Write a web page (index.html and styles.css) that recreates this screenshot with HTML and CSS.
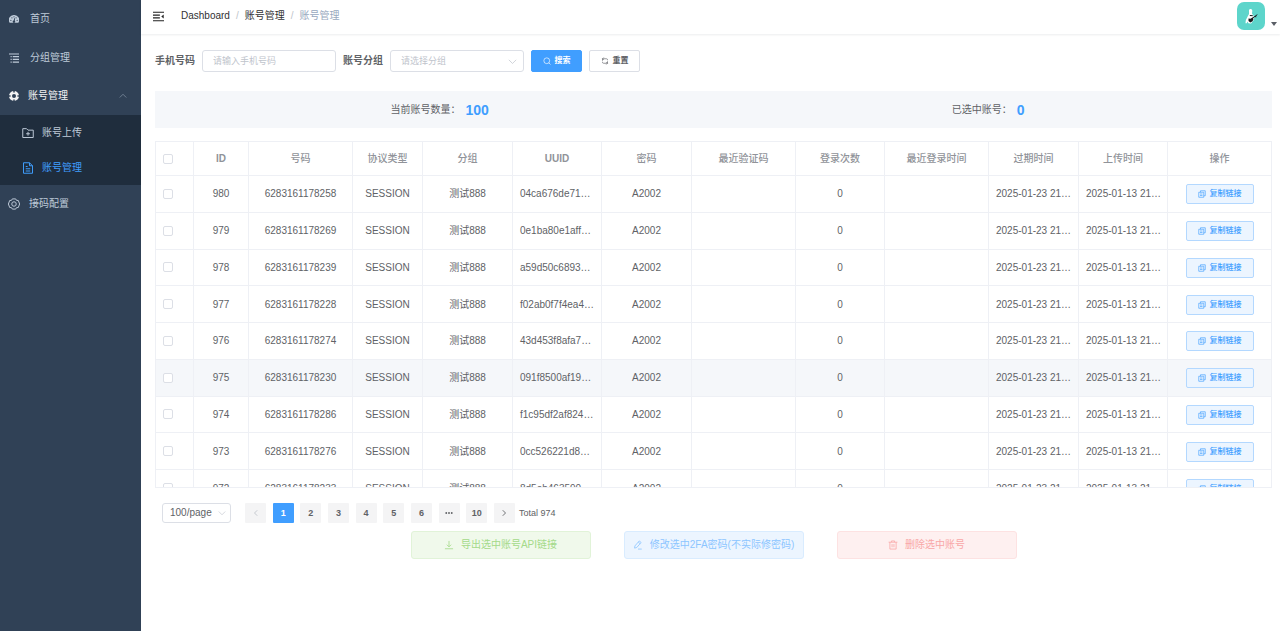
FILE: index.html
```html
<!DOCTYPE html>
<html lang="zh-CN">
<head>
<meta charset="utf-8">
<title>账号管理</title>
<link rel="stylesheet" href="styles.css">
</head>
<body>
<svg class="sprite" aria-hidden="true">
  <symbol id="i-copy" viewBox="0 0 16 16"><path d="M5 4.5V1.5h9.5v10h-3M1.500 4.500h10v10h-10zM4 8h5M4 11h5"/></symbol>
  <symbol id="i-down" viewBox="0 0 16 16"><path d="M1.500 5L8 11.500 14.500 5"/></symbol>
  <symbol id="i-left" viewBox="0 0 16 16"><path d="M10.500 2.500L5 8l5.500 5.500"/></symbol>
  <symbol id="i-right" viewBox="0 0 16 16"><path d="M5.500 2.500L11 8l-5.500 5.500"/></symbol>
</svg>
<div class="app">
  <nav class="sidebar">
    <a class="menu-item" href="#"><svg class="icon fill" viewBox="0 0 16 16"><path fill-rule="evenodd" d="M8 1.500a8 8 0 0 0-7 12.500h14A8 8 0 0 0 8 1.500zM3 11a1 1 0 1 1 0-2 1 1 0 0 1 0 2zm1.700-3.900a1 1 0 1 1 0-2 1 1 0 0 1 0 2zM8 5.400a1 1 0 1 1 0-2 1 1 0 0 1 0 2zm1.300 5.500a1.900 1.900 0 1 1-1.800-.6L8.600 6.500l1 .3zm2-3.800a1 1 0 1 1 0-2 1 1 0 0 1 0 2zM13 11a1 1 0 1 1 0-2 1 1 0 0 1 0 2z"/></svg>首页</a>
    <a class="menu-item" href="#"><svg class="icon" viewBox="0 0 16 16"><path stroke-width="1.800" d="M0 1.500h16M6 5.800h10M6 10.200h10M6 14.500h10M2.500 5.800h1.800M2.500 10.200h1.800M2.500 14.500h1.800"/></svg>分组管理</a>
    <a class="menu-item open" href="#"><svg class="icon" viewBox="0 0 16 16"><circle cx="8" cy="8" r="5.600" stroke-width="4.800"/><path class="cut" d="M8 0v2.500M8 13.500v2.500M0 8h2.500M13.500 8h2.500"/></svg>账号管理<svg class="icon arrow" viewBox="0 0 16 16"><path d="M1.500 11L8 4.500l6.500 6.500"/></svg></a>
    <div class="submenu">
      <a class="sub-item" href="#"><svg class="icon" viewBox="0 0 16 16"><path d="M1 14V2.200h5l2 2h7V14zM8 6.500v5M5.500 9h5"/></svg>账号上传</a>
      <a class="sub-item active" href="#"><svg class="icon" viewBox="0 0 16 16"><path d="M2 1h8l4 4v10H2zM10 1v4h4M5 6h2.500M5 9h6M5 12h6"/></svg>账号管理</a>
    </div>
    <a class="menu-item flush" href="#"><svg class="icon" viewBox="0 0 16 16"><path d="M5.800 1.200h4.400l1.200 2 2.300.1L15.500 8l-1.800 4.700-2.300.1-1.200 2H5.800l-1.200-2-2.300-.1L.5 8l1.800-4.700 2.300-.1z"/><circle cx="8" cy="8" r="3"/></svg>接码配置</a>
  </nav>

  <div class="page">
    <header class="topbar">
      <button class="fold" type="button" aria-label="折叠菜单"><svg class="icon" viewBox="0 0 16 16"><path stroke-width="1.700" d="M0 1.800h16M0 6h10M0 10h10M0 14.200h16"/><path class="solid" d="M15.500 5.200v5.600L12 8z"/></svg></button>
      <nav class="crumbs"><a href="#">Dashboard</a><span class="slash">/</span><a href="#">账号管理</a><span class="slash">/</span><span class="current">账号管理</span></nav>
      <button class="user" type="button" aria-label="用户菜单">
        <svg class="avatar" viewBox="0 0 28 28"><rect width="28" height="28" rx="7" fill="#5dd5cb"/><path fill="#fff" d="M12 8c.8-1.500 3.200-1 3.300.8l-.3 2.700 1.600 2.500.2 4-2.800 3.500-2.600-.3-.9-1.700-.8 1.700H8.500l.3-3 1.700-3.500 1.500-2.700z"/><path fill="#17191d" d="M11.500 16.500l2 .2 2-1.200 1 1.500-1 2.300-2.200 1.200-1.800-1.500z"/><path fill="none" stroke="#17191d" stroke-width="1" d="M15 16.500l2.500-1.800 2.800-2M12.800 13.500l3 .2M17.500 14.500l1.800.3"/></svg>
        <svg class="caret" viewBox="0 0 6 4"><path d="M0 0h6L3 4z"/></svg>
      </button>
    </header>

    <main class="content">
      <form class="filters">
        <label for="phone">手机号码</label>
        <input class="field" id="phone" type="text" placeholder="请输入手机号码">
        <label for="group">账号分组</label>
        <span class="select-wrap wide"><select class="field" id="group"><option>请选择分组</option></select><svg class="icon"><use href="#i-down"/></svg></span>
        <button class="btn primary" type="button"><svg class="icon" viewBox="0 0 16 16"><circle cx="7.500" cy="7.500" r="5.800"/><path d="M11.500 11.500l3.500 3.500"/></svg>搜索</button>
        <button class="btn" type="button"><svg class="icon" viewBox="0 0 16 16"><path d="M3 7.500V3.500h8a2 2 0 0 1 2 2v1M5.500 1L3 3.500 5.500 6M13 8.500v4H5a2 2 0 0 1-2-2v-1M10.500 15l2.500-2.500-2.500-2.500"/></svg>重置</button>
      </form>

      <section class="stats">
        <div>当前账号数量：<strong>100</strong></div>
        <div>已选中账号：<strong>0</strong></div>
      </section>

      <div class="table-box">
        <table>
          <colgroup><col class="c-check"><col class="c-id"><col class="c-wide"><col class="c-type"><col><col class="c-slim"><col><col class="c-wide"><col class="c-slim"><col class="c-wide"><col><col class="c-slim"><col class="c-wide"></colgroup>
          <thead><tr><th class="check"><input type="checkbox" aria-label="全选"></th><th class="latin">ID</th><th>号码</th><th>协议类型</th><th>分组</th><th class="latin">UUID</th><th>密码</th><th>最近验证码</th><th>登录次数</th><th>最近登录时间</th><th>过期时间</th><th>上传时间</th><th>操作</th></tr></thead>
          <tbody id="rows"></tbody>
        </table>
      </div>

      <div class="pagination">
        <span class="select-wrap size"><select class="field" aria-label="每页条数"><option>100/page</option></select><svg class="icon"><use href="#i-down"/></svg></span>
        <div class="pager">
          <button type="button" aria-label="上一页" disabled><svg class="icon"><use href="#i-left"/></svg></button>
          <button type="button" class="on">1</button><button type="button">2</button><button type="button">3</button><button type="button">4</button><button type="button">5</button><button type="button">6</button>
          <button type="button" aria-label="更多"><svg class="icon fill" viewBox="0 0 16 16"><circle cx="2.500" cy="8" r="1.900"/><circle cx="8" cy="8" r="1.900"/><circle cx="13.500" cy="8" r="1.900"/></svg></button>
          <button type="button">10</button>
          <button type="button" aria-label="下一页"><svg class="icon"><use href="#i-right"/></svg></button>
        </div>
        <span>Total 974</span>
      </div>

      <div class="actions">
        <button class="success" type="button" disabled><svg class="icon" viewBox="0 0 16 16"><path d="M8 1.500v9M4.500 7.500L8 11l3.500-3.500M1.500 14h13"/></svg>导出选中账号API链接</button>
        <button class="info" type="button" disabled><svg class="icon" viewBox="0 0 16 16"><path d="M3 9.500L10 1.500l3 2.500-7 8-3.500 1zM8.500 3.500l3 2.500M8 14.500h6"/></svg>修改选中2FA密码(不实际修密码)</button>
        <button class="danger" type="button" disabled><svg class="icon" viewBox="0 0 16 16"><path d="M1 3.500h14M5.500 3.500v-2h5v2M3 3.500v11h10v-11M6.500 6.500v5M9.500 6.500v5"/></svg>删除选中账号</button>
      </div>
    </main>
  </div>
</div>
<script src="rows.js"></script>
</body>
</html>
```
FILE: styles.css
```css
* { box-sizing: border-box; }
body { margin: 0; font: 10px/14px "Liberation Sans", "Noto Sans CJK SC", sans-serif; color: #606266; background: #fff; }
a { color: inherit; text-decoration: none; }
button, input, select { margin: 0; font: inherit; color: inherit; }
button { padding: 0; border: 0; background: none; }
.sprite { position: absolute; width: 0; height: 0; }
.icon { width: 10px; height: 10px; flex: none; fill: none; stroke: currentColor; stroke-width: 1.3; }
.icon.fill { fill: currentColor; stroke: none; }
.solid { fill: currentColor; stroke: none; }

.app { display: flex; min-height: 100vh; }
.sidebar { flex: none; width: 141px; background: #304156; color: #bfcbd9; }
.menu-item { display: flex; align-items: center; gap: 11px; height: 38px; padding: 0 14px 0 9px; }
.menu-item:first-child { margin-bottom: 1px; }
.menu-item.open { color: #f4f4f5; gap: 9px; }
.menu-item.flush { gap: 9px; padding-left: 8px; }
.menu-item.flush .icon { width: 12px; height: 12px; }
.cut { stroke: #304156; stroke-width: 2.4; }
.menu-item .arrow { width: 8px; height: 8px; margin-left: auto; color: #909fb0; }
.submenu { background: #1f2d3d; }
.sub-item { display: flex; align-items: center; gap: 8px; height: 35px; padding-left: 22px; }
.sub-item .icon { width: 12px; height: 12px; }
.sub-item.active { color: #409eff; }

.page { flex: 1; min-width: 0; }
.topbar { display: flex; align-items: center; height: 34px; padding: 0 3px 2px 12px; box-shadow: 0 1px 2px rgba(0, 21, 41, .08); }
.fold { display: flex; color: #222; }
.fold .icon { width: 11px; height: 11px; }
.crumbs { display: flex; margin-left: 17px; color: #303133; }
.slash { margin: 0 6px; color: #c0c4cc; }
.current { color: #97a8be; }
.user { display: flex; align-items: flex-end; gap: 6px; margin-left: auto; }
.avatar { width: 28px; height: 28px; }
.caret { width: 6px; height: 4px; margin-bottom: 4px; fill: #5a5e66; }

.content { padding: 16px 8px 0 14px; }
.filters { display: flex; align-items: center; gap: 7px; }
.filters label { font-weight: 700; }
.field { width: 134px; height: 22px; padding: 0 10px; border: 1px solid #dcdfe6; border-radius: 3px; background: #fff; font-size: 9px; appearance: none; }
.field::placeholder { color: #c0c4cc; opacity: 1; }
.select-wrap { position: relative; display: flex; }
.select-wrap .icon { position: absolute; right: 7px; top: 7px; width: 9px; height: 9px; color: #c0c4cc; pointer-events: none; }
.wide .field { color: #c0c4cc; }
.size .field { width: 69px; height: 20px; padding: 0 7px; font-size: 10px; }
.size .icon { right: 5px; top: 6px; width: 8px; height: 8px; }
.btn { display: flex; align-items: center; justify-content: center; gap: 4px; width: 51px; height: 22px; border: 1px solid #dcdfe6; border-radius: 2px; font-size: 8px; font-weight: 700; }
.btn .icon { width: 8px; height: 8px; }
.primary { border-color: #409eff; background: #409eff; color: #fff; }

.stats { display: flex; justify-content: space-around; margin-top: 19px; padding: 12px 16px 11px 4px; background: #f5f7fa; }
.stats div { display: flex; align-items: center; gap: 5px; height: 14px; }
.stats strong { color: #409eff; font-size: 14px; }

.table-box { height: 347px; margin-top: 13px; overflow: hidden; border: 1px solid #eef0f5; border-right: 0; }
table { width: 100%; height: 365px; table-layout: fixed; border-spacing: 0; }
col { width: 90px; }
.c-slim { width: 89px; }
.c-check { width: 38px; }
.c-id { width: 55px; }
.c-type { width: 70px; }
.c-wide { width: 104px; }
th, td { padding: 1px 0 0; border-right: 1px solid #eef0f5; border-bottom: 1px solid #eef0f5; text-align: center; white-space: nowrap; }
th { height: 34px; color: #909399; font-weight: 500; }
th.latin { font-weight: 700; }
td.clip { padding: 1px 0 0 7px; text-align: left; }
th.check, td.check { padding: 0 0 0 7px; text-align: left; }
.check input { display: block; width: 10px; height: 10px; appearance: none; border: 1px solid #dcdfe6; border-radius: 2px; background: #fff; }
tr.hover td { background: #f5f7fa; }
.copy { display: inline-flex; align-items: center; gap: 4px; height: 20px; padding: 0 11px; border: 1px solid #b3d8ff; border-radius: 2px; background: #ecf5ff; color: #409eff; font-size: 8px; font-weight: 500; vertical-align: middle; }
.copy .icon { width: 8px; height: 8px; }

.pagination { display: flex; align-items: center; margin: 15px 0 0 7px; font-size: 9px; }
.pager { display: flex; justify-content: space-between; width: 270px; margin: 0 4px 0 14px; }
.pager button { display: flex; align-items: center; justify-content: center; width: 21px; height: 20px; border-radius: 1px; background: #f4f4f5; font-weight: 700; }
.pager button.on { background: #409eff; color: #fff; }
.pager button:disabled { color: #c0c4cc; }
.pager .icon { width: 8px; height: 8px; stroke-width: 1.8; }

.actions { display: flex; justify-content: center; gap: 33px; margin-top: 8px; }
.actions button { display: flex; align-items: center; justify-content: center; gap: 7px; width: 180px; height: 28px; border: 1px solid; border-radius: 3px; }
.actions .success { color: #a4da89; background: #f0f9eb; border-color: #e1f3d8; }
.actions .info { color: #8cc5ff; background: #ecf5ff; border-color: #d9ecff; }
.actions .danger { color: #f9a7a7; background: #fef0f0; border-color: #fde2e2; }
```
FILE: rows.js
```javascript
const accounts = [
  [980, '6283161178258', '04ca676de71…'],
  [979, '6283161178269', '0e1ba80e1aff…'],
  [978, '6283161178239', 'a59d50c6893…'],
  [977, '6283161178228', 'f02ab0f7f4ea4…'],
  [976, '6283161178274', '43d453f8afa7…'],
  [975, '6283161178230', '091f8500af19…'],
  [974, '6283161178286', 'f1c95df2af824…'],
  [973, '6283161178276', '0cc526221d8…'],
  [972, '6283161178233', '8d5eb463590…']
];
document.getElementById('rows').innerHTML = accounts.map(([id, phone, uuid]) => `
<tr${id === 975 ? ' class="hover"' : ''}>
<td class="check"><input type="checkbox" aria-label="选择 ${id}"></td>
<td>${id}</td><td>${phone}</td><td>SESSION</td><td>测试888</td><td class="clip">${uuid}</td>
<td>A2002</td><td></td><td>0</td><td></td>
<td class="clip">2025-01-23 21…</td><td class="clip">2025-01-13 21…</td>
<td><button class="copy" type="button"><svg class="icon"><use href="#i-copy"/></svg>复制链接</button></td>
</tr>`).join('');
```
